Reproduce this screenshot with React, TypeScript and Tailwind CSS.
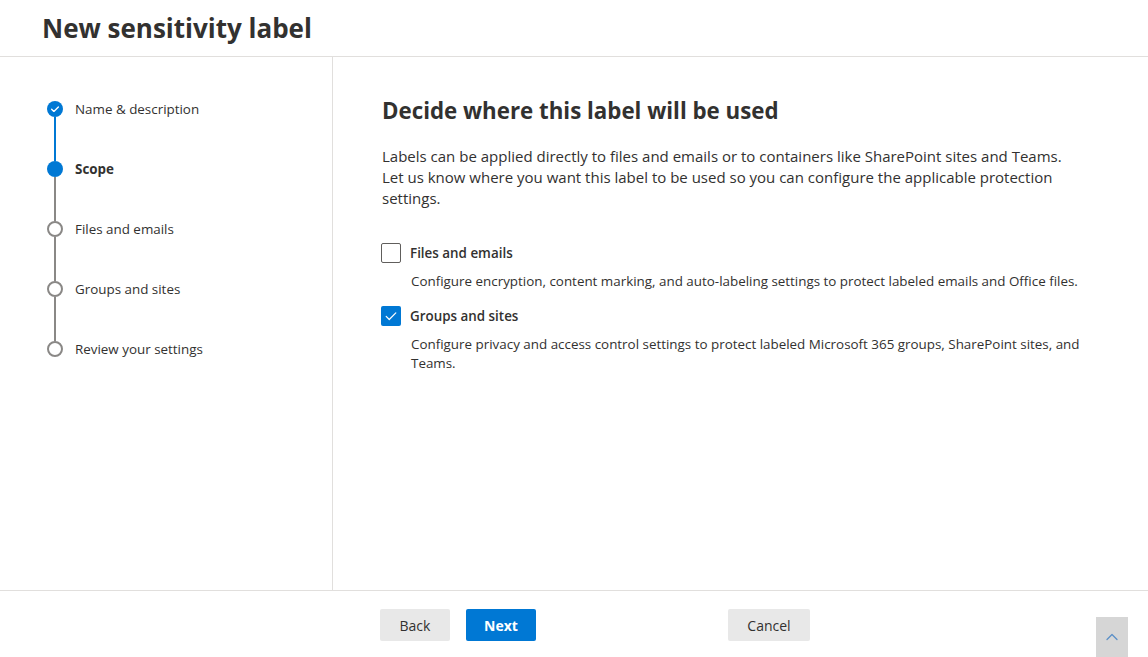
import { ChevronUp } from "lucide-react";

const font = { fontFamily: '"Segoe UI", "Open Sans", "Liberation Sans", sans-serif' };

type Step = { label: string; state: "done" | "current" | "todo" };

const steps: Step[] = [
  { label: "Name & description", state: "done" },
  { label: "Scope", state: "current" },
  { label: "Files and emails", state: "todo" },
  { label: "Groups and sites", state: "todo" },
  { label: "Review your settings", state: "todo" },
];

function StepDot({ state }: { state: Step["state"] }) {
  if (state === "done") {
    return (
      <div className="flex h-4 w-4 items-center justify-center rounded-full bg-[#0078d4]">
        <svg viewBox="0 0 16 16" className="h-3 w-3" fill="none" stroke="white" strokeWidth="1.8">
          <path d="M3.5 8.2l3 3 6-6" strokeLinecap="round" strokeLinejoin="round" />
        </svg>
      </div>
    );
  }
  if (state === "current") return <div className="h-4 w-4 rounded-full bg-[#0078d4]" />;
  return <div className="h-4 w-4 rounded-full border-2 border-[#8a8886] bg-white" />;
}

function Stepper() {
  return (
    <div className="pl-[47px] pt-[44px]">
      {steps.map((s, i) => (
        <div key={s.label} className="flex">
          <div className="flex w-4 flex-col items-center">
            <StepDot state={s.state} />
            {i < steps.length - 1 && (
              <div className={`h-[44px] w-[2px] ${s.state === "done" ? "bg-[#0078d4]" : "bg-[#8a8886]"}`} />
            )}
          </div>
          <div
            className={`ml-3 flex h-4 items-center whitespace-nowrap text-[13.4px] text-[#323130] ${
              s.state === "current" ? "font-bold" : ""
            }`}
          >
            {s.label}
          </div>
        </div>
      ))}
    </div>
  );
}

function Checkbox({ checked }: { checked: boolean }) {
  if (checked) {
    return (
      <div className="flex h-5 w-5 shrink-0 items-center justify-center rounded-[2px] bg-[#0078d4]">
        <svg viewBox="0 0 16 16" className="h-[14px] w-[14px]" fill="none" stroke="white" strokeWidth="1.4">
          <path d="M2.5 8.5l3.5 3.5 7.5-7.5" strokeLinecap="round" strokeLinejoin="round" />
        </svg>
      </div>
    );
  }
  return <div className="h-5 w-5 shrink-0 rounded-[2px] border border-[#605e5c] bg-white" />;
}

function Option({ checked, title, children }: { checked: boolean; title: string; children: React.ReactNode }) {
  return (
    <div>
      <div className="flex h-5 items-center">
        <Checkbox checked={checked} />
        <span className="ml-[9px] text-[13.4px] font-semibold text-[#323130]">{title}</span>
      </div>
      <div className="ml-[30px] mt-[9px] text-[13.4px] leading-[19px] text-[#323130]">{children}</div>
    </div>
  );
}

export default function App() {
  return (
    <div className="relative flex h-[657px] w-full flex-col overflow-hidden bg-white text-[#323130]" style={font}>
      <header className="flex h-[57px] shrink-0 items-center border-b border-[#e1dfdd] pl-[42px]">
        <h1 className="text-[26px] font-bold leading-[34px] text-[#323130]">New sensitivity label</h1>
      </header>

      <div className="flex min-h-0 flex-1">
        <aside className="w-[333px] shrink-0 border-r border-[#e1dfdd]">
          <Stepper />
        </aside>

        <main className="flex-1 pl-[48px] pt-[40px]">
          <h2 className="pl-px text-[22.3px] font-bold leading-[28px] text-[#323130]">
            Decide where this label will be used
          </h2>
          <p className="mt-[21px] pl-px text-[15px] leading-[21px] text-[#323130]">
            Labels can be applied directly to files and emails or to containers like SharePoint sites and Teams.
            <br />
            Let us know where you want this label to be used so you can configure the applicable protection
            <br />
            settings.
          </p>

          <div className="mt-[34px] flex flex-col gap-[15px]">
            <Option checked={false} title="Files and emails">
              Configure encryption, content marking, and auto-labeling settings to protect labeled emails and Office files.
            </Option>
            <Option checked title="Groups and sites">
              Configure privacy and access control settings to protect labeled Microsoft 365 groups, SharePoint sites, and
              <br />
              Teams.
            </Option>
          </div>
        </main>
      </div>

      <footer className="flex h-[67px] shrink-0 items-start border-t border-[#e1dfdd] pl-[380px] pt-[18px]">
        <button className="h-8 w-[70px] rounded-[2px] bg-[#e8e8e8] text-[14px] text-[#323130]">Back</button>
        <button className="ml-4 h-8 w-[70px] rounded-[2px] bg-[#0078d4] text-[14px] font-bold text-white">Next</button>
        <button className="ml-[192px] h-8 w-[82px] rounded-[2px] bg-[#e8e8e8] text-[14px] text-[#323130]">Cancel</button>
      </footer>

      <div className="absolute bottom-0 right-[20px] flex h-[40px] w-[32px] items-center justify-center bg-[#d6d6d6]">
        <ChevronUp className="h-5 w-5 text-[#5b8fc7]" strokeWidth={1.5} />
      </div>
    </div>
  );
}
